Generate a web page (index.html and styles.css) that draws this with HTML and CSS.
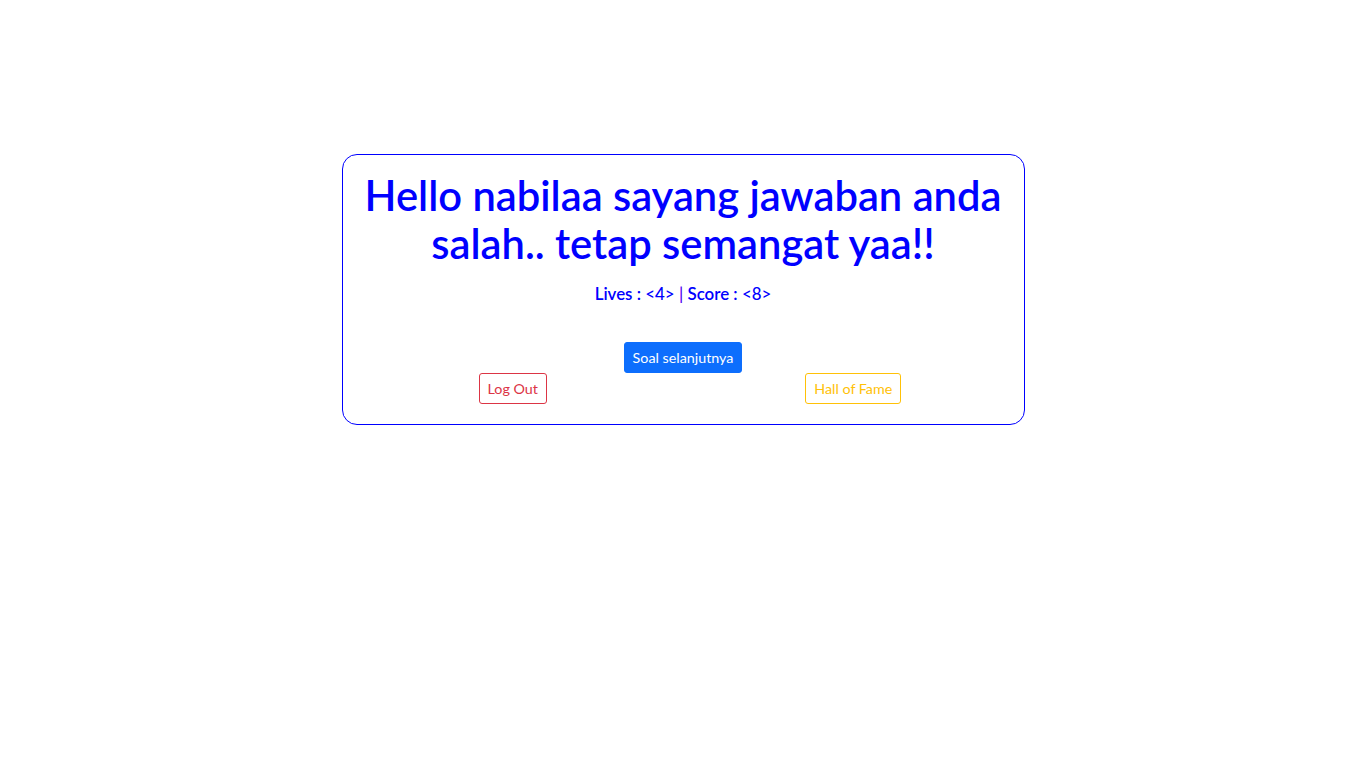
FILE: index.html
```html
<!DOCTYPE html>
<html lang="id">
<head>
<meta charset="utf-8">
<title>Hasil Jawaban</title>
<link rel="stylesheet" href="styles.css">
</head>
<body>
<main class="card">
  <h1 class="title">Hello nabilaa sayang jawaban anda salah.. tetap semangat yaa!!</h1>
  <p class="stats"><b>Lives :</b> &lt;4&gt; <span class="sep">|</span> <b>Score :</b> &lt;8&gt;</p>
  <div class="next"><a class="btn btn-primary" href="#">Soal selanjutnya</a></div>
  <div class="actions">
    <div class="col"><a class="btn btn-outline-danger" href="#">Log Out</a></div>
    <div class="col"><a class="btn btn-outline-warning" href="#">Hall of Fame</a></div>
  </div>
</main>
</body>
</html>
```

FILE: styles.css
```css
* { box-sizing: border-box; }
html, body { margin: 0; padding: 0; background: #fff; }
body {
  font-family: Lato, "Open Sans", "Liberation Sans", sans-serif;
  font-size: 16px;
  line-height: 1.5;
  color: #212529;
}
.card {
  width: 50%;
  margin: 154px auto 0;
  border: 1px solid #0000ff;
  border-radius: 15px;
  padding: 16px 16px 20px;
  text-align: center;
  color: #0000ff;
}
.title {
  margin: 0 0 15px;
  font-size: 41.7px;
  line-height: 48px;
  font-weight: 600;
  color: #0000ff;
}
.stats {
  margin: 0;
  font-size: 16.9px;
  line-height: 24px;
  font-weight: 500;
}
.stats b { font-weight: 600; }
.sep { color: #5000f0; }
.next { margin-top: 36px; }
.actions {
  display: flex;
  margin: 0 -16px;
}
.col { flex: 1 1 0; text-align: center; }
.btn {
  display: inline-block;
  padding: 4px 8px;
  font-size: 14.3px;
  line-height: 21px;
  border: 1px solid transparent;
  border-radius: 3px;
  text-decoration: none;
  font-weight: 400;
}
.btn-primary { background: #0d6efd; border-color: #0d6efd; color: #fff; }
.btn-outline-danger { color: #dc3545; border-color: #dc3545; }
.btn-outline-warning { color: #ffc107; border-color: #ffc107; }
```
